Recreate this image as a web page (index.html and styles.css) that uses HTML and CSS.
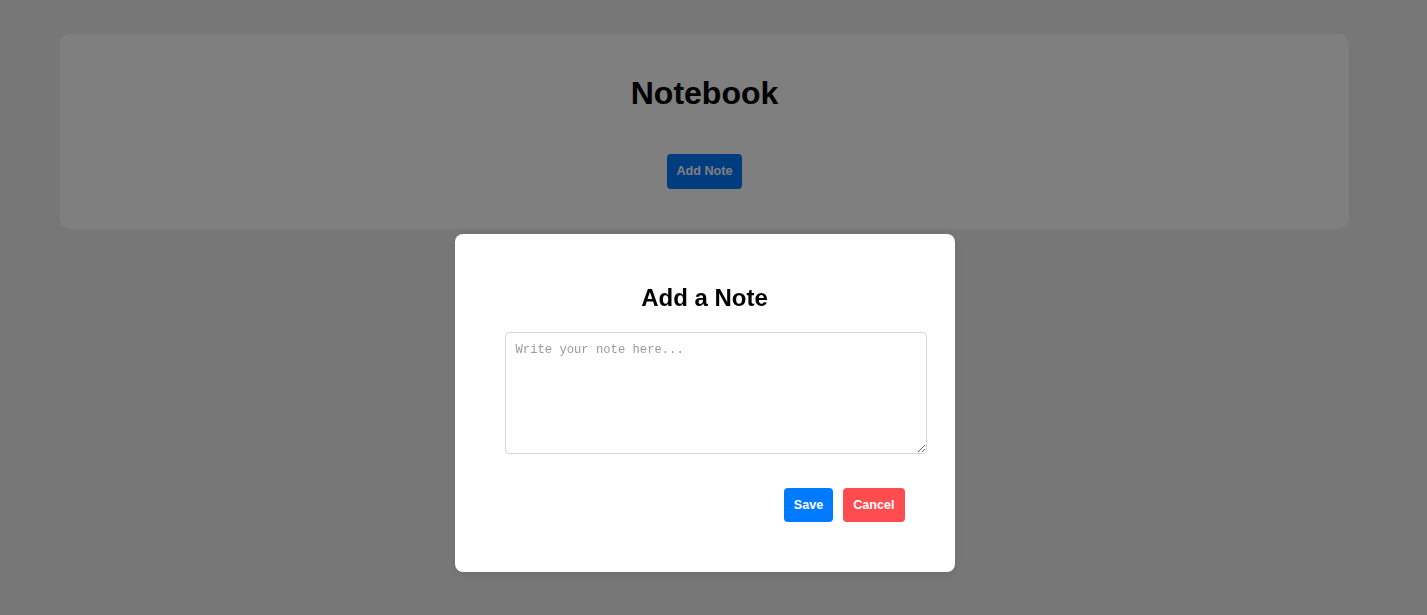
FILE: index.html
```html
<!DOCTYPE html>
<html lang="en">
<head>
<meta charset="utf-8">
<title>Notebook</title>
<link rel="stylesheet" href="styles.css">
</head>
<body>
  <div class="page">
    <div class="card">
      <h1 class="title">Notebook</h1>
      <button class="btn btn-primary add-btn">Add Note</button>
    </div>
  </div>
  <div class="overlay">
    <div class="modal">
      <h2 class="modal-title">Add a Note</h2>
      <textarea class="note-input" placeholder="Write your note here..."></textarea>
      <div class="actions">
        <button class="btn btn-primary">Save</button>
        <button class="btn btn-danger">Cancel</button>
      </div>
    </div>
  </div>
</body>
</html>
```

FILE: styles.css
```css
html, body {
  margin: 0;
  padding: 0;
  height: 100%;
}
body {
  background: #eeeeee;
  font-family: "Liberation Sans", Arial, sans-serif;
}
.page {
  padding: 34px 78px 0 60px;
}
.card {
  background: #ffffff;
  border-radius: 10px;
  padding: 20px;
  text-align: center;
}
.title {
  font-size: 32px;
  font-weight: bold;
  color: #000;
  margin: 21px 0 22px;
}
.btn {
  font-family: "Liberation Sans", Arial, sans-serif;
  font-size: 12.6px;
  font-weight: bold;
  border: none;
  border-radius: 4px;
  padding: 10px;
  color: #fff;
  cursor: pointer;
  line-height: 15px;
}
.btn-primary {
  background: #007bff;
}
.btn-danger {
  background: #ff4d4f;
}
.add-btn {
  margin: 20px 0;
}
.actions .btn {
  line-height: 14px;
}
.overlay {
  position: fixed;
  inset: 0;
  background: rgba(0, 0, 0, 0.5);
  display: flex;
  justify-content: center;
  align-items: flex-start;
  padding: 234px 18px 0 0;
  box-sizing: border-box;
}
.modal {
  width: 400px;
  background: #fff;
  border-radius: 8px;
  padding: 50px;
  box-shadow: 0 2px 10px rgba(0, 0, 0, 0.1);
}
.modal-title {
  margin: 0 0 20px;
  font-size: 24px;
  font-weight: bold;
  text-align: center;
  color: #000;
}
.note-input {
  display: block;
  width: 100%;
  height: 100px;
  padding: 10px;
  border: 1px solid #d6d6d6;
  border-radius: 4px;
  font-family: "Liberation Mono", "Courier New", monospace;
  font-size: 12.2px;
  resize: vertical;
  margin: 0 0 34px;
  box-sizing: content-box;
}
.note-input::placeholder {
  color: #9a9a9a;
}
.actions {
  display: flex;
  justify-content: flex-end;
  gap: 10px;
}
```
